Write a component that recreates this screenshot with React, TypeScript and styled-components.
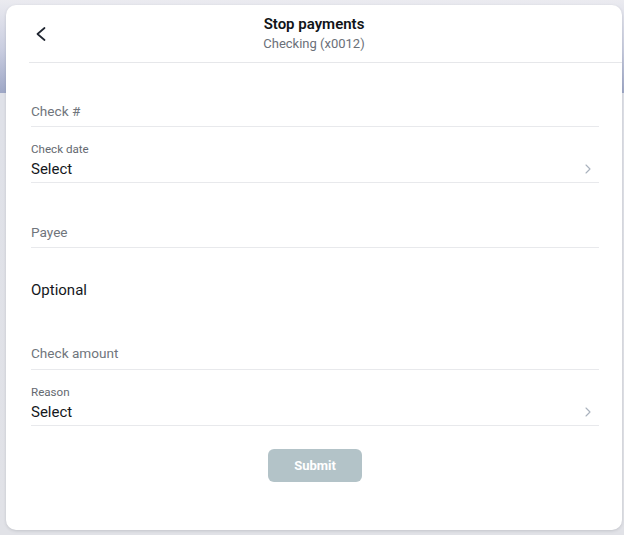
import React from "react";
import styled, { createGlobalStyle } from "styled-components";

const Global = createGlobalStyle`
  html, body { margin: 0; padding: 0; }
  body {
    width: 624px;
    height: 535px;
    overflow: hidden;
    font-family: Roboto, "Liberation Sans", Arial, sans-serif;
    background: linear-gradient(to bottom, #ebebf0 0px, #c9cde0 50px, #9ea7c6 93px, #dfe1e8 93px, #e1e2e7 100%);
  }
  * { box-sizing: border-box; }
`;

const Card = styled.div`
  margin: 5px 2px 0 6px;
  width: 616px;
  height: 525px;
  background: #ffffff;
  border-radius: 10px;
  box-shadow: 0 1px 3px rgba(60, 64, 80, 0.18);
  display: flex;
  flex-direction: column;
`;

const Header = styled.header`
  display: grid;
  grid-template-columns: 1fr auto 1fr;
  align-items: center;
  padding: 9px 0;
`;

const BackButton = styled.button`
  justify-self: start;
  margin-left: 27px;
  width: 16px;
  height: 20px;
  padding: 0;
  border: none;
  background: none;
  display: flex;
  align-items: center;
  justify-content: center;
  cursor: pointer;
`;

const TitleBlock = styled.div`
  display: flex;
  flex-direction: column;
  align-items: center;
`;

const Title = styled.h1`
  margin: 0;
  font-size: 15px;
  line-height: 20px;
  font-weight: 600;
  color: #111418;
`;

const Subtitle = styled.div`
  margin-top: 1px;
  font-size: 13px;
  line-height: 18px;
  color: #6b7079;
`;

const HeaderRule = styled.div`
  margin-left: 23px;
  height: 1px;
  background: #e6e7ea;
`;

const Form = styled.div`
  padding: 0 23px 0 25px;
  display: flex;
  flex-direction: column;
`;

const InputField = styled.div<{ $top: number; $bottom: number }>`
  padding-top: ${(p) => p.$top}px;
  padding-bottom: ${(p) => p.$bottom}px;
  border-bottom: 1px solid #e8e9ec;
  font-size: 13.6px;
  line-height: 20px;
  color: #70757c;
`;

const SelectField = styled.div<{ $bottom: number }>`
  padding-top: 15px;
  padding-bottom: ${(p) => p.$bottom}px;
  border-bottom: 1px solid #e8e9ec;
  display: flex;
  flex-direction: column;
  gap: 3px;
`;

const SmallLabel = styled.div`
  font-size: 11.6px;
  line-height: 14px;
  color: #646970;
`;

const SelectRow = styled.div`
  display: flex;
  align-items: center;
  justify-content: space-between;
  padding-right: 8px;
`;

const SelectValue = styled.div`
  font-size: 15px;
  line-height: 20px;
  color: #15181c;
`;

const Section = styled.div`
  margin-top: 32px;
  font-size: 15px;
  line-height: 20px;
  color: #15181c;
`;

const ButtonRow = styled.div`
  display: flex;
  justify-content: center;
  padding-top: 23px;
`;

const SubmitButton = styled.button`
  width: 94px;
  height: 33px;
  border: none;
  border-radius: 6px;
  background: #b3c3c8;
  color: #ffffff;
  font-family: Roboto, "Liberation Sans", Arial, sans-serif;
  font-size: 13px;
  font-weight: 700;
`;

const ChevronLeft = () => (
  <svg width="10" height="14" viewBox="0 0 10 14" fill="none">
    <path d="M8.5 1 L1.5 7 L8.5 13" stroke="#1f2530" strokeWidth="1.7" strokeLinecap="round" strokeLinejoin="round" />
  </svg>
);

const ChevronRight = () => (
  <svg width="6" height="10" viewBox="0 0 6 10" fill="none">
    <path d="M1 1 L5 5 L1 9" stroke="#a9b2bd" strokeWidth="1.1" strokeLinecap="round" strokeLinejoin="round" />
  </svg>
);

export default function App() {
  return (
    <>
      <Global />
      <Card>
        <Header>
          <BackButton aria-label="Back">
            <ChevronLeft />
          </BackButton>
          <TitleBlock>
            <Title>Stop payments</Title>
            <Subtitle>Checking (x0012)</Subtitle>
          </TitleBlock>
          <div />
        </Header>
        <HeaderRule />
        <Form>
          <InputField $top={38} $bottom={5}>Check #</InputField>
          <SelectField $bottom={3}>
            <SmallLabel>Check date</SmallLabel>
            <SelectRow>
              <SelectValue>Select</SelectValue>
              <ChevronRight />
            </SelectRow>
          </SelectField>
          <InputField $top={39} $bottom={5}>Payee</InputField>
          <Section>Optional</Section>
          <InputField $top={43} $bottom={6}>Check amount</InputField>
          <SelectField $bottom={3}>
            <SmallLabel>Reason</SmallLabel>
            <SelectRow>
              <SelectValue>Select</SelectValue>
              <ChevronRight />
            </SelectRow>
          </SelectField>
          <ButtonRow>
            <SubmitButton>Submit</SubmitButton>
          </ButtonRow>
        </Form>
      </Card>
    </>
  );
}
